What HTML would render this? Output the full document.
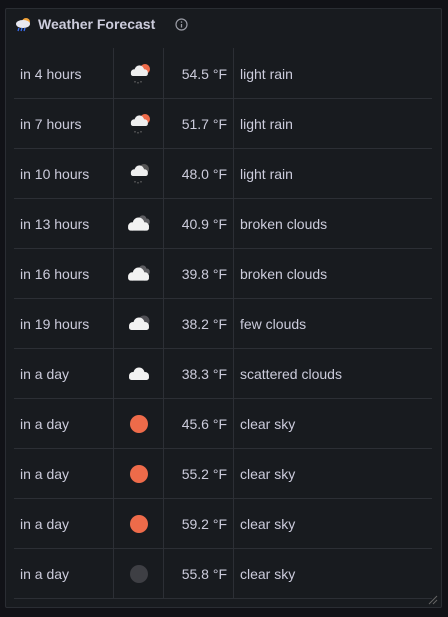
<!DOCTYPE html>
<html><head><style>
body{margin:0;background:#111217;width:448px;height:617px;overflow:hidden;font-family:"Liberation Sans",sans-serif;}
.p{position:absolute;left:5px;top:8px;width:435px;height:598px;background:#181b1f;border:1px solid #2a2d33;border-radius:2px;}
.t{position:absolute;left:38px;top:16px;color:#ccccdc;font-size:14px;font-weight:bold;}
.row{position:absolute;left:14px;width:418px;height:50px;border-bottom:1px solid #2c2f35;color:#ccccdc;font-size:14px;}
.row div{position:absolute;top:1px;height:50px;line-height:50px;}
.c1{left:6px}
.c3{left:150px;width:63px;text-align:right}
.c4{left:226px}
.v{position:absolute;top:48px;width:1px;height:550px;background:#2c2f35;}
.row div.ic{left:112px;top:13px;height:26px;line-height:0}
.ic svg{display:block}
</style></head><body>
<div class="p"></div>
<svg style="position:absolute;left:15px;top:16px" width="17" height="16" viewBox="0 0 17 16"><circle cx="11" cy="6" r="4" fill="#f2a33a"/><ellipse cx="8" cy="8" rx="7" ry="4" fill="#e8e8f0"/><path d="M4 12l-1 3M7 12l-1 3M10 12l-1 3" stroke="#3a6df0" stroke-width="1.3"/></svg>
<div class="t">Weather Forecast</div>
<svg style="position:absolute;left:175px;top:18px" width="13" height="13" viewBox="0 0 13 13"><circle cx="6.5" cy="6.5" r="5.5" fill="none" stroke="#9a9ca5" stroke-width="1.2"/><path d="M6.5 6v3.5" stroke="#9a9ca5" stroke-width="1.3"/><circle cx="6.5" cy="4" r=".8" fill="#9a9ca5"/></svg>
<div class="v" style="left:113px"></div><div class="v" style="left:163px"></div><div class="v" style="left:233px"></div>
<div id="rows"></div>
<svg style="position:absolute;left:428px;top:595px" width="10" height="10"><path d="M1 9L9 1M5 9L9 5" stroke="#666" stroke-width="1"/></svg>
<script>
function cloud(x,y,s,c){return '<g transform="translate('+x+','+y+') scale('+s+')" fill="'+c+'"><circle cx="5" cy="9" r="4"/><circle cx="11" cy="6" r="5.5"/><circle cx="17" cy="9" r="4"/><rect x="1" y="8" width="20" height="5" rx="2.5"/></g>';}
var rainS='<circle cx="19" cy="8" r="5" fill="#ee6b4a"/>'+cloud(4,4,0.85,"#eee")+'<path d="M9 20v1.5M12 21v1.5M15 20v1.5" stroke="#777"/>';
var rainN='<circle cx="18" cy="8" r="5" fill="#555"/>'+cloud(4,4,0.85,"#eee")+'<path d="M9 20v1.5M12 21v1.5M15 20v1.5" stroke="#777"/>';
var d=[["in 4 hours","rs","54.5","light rain"],["in 7 hours","rs","51.7","light rain"],["in 10 hours","rn","48.0","light rain"],["in 13 hours","bc","40.9","broken clouds"],["in 16 hours","bc","39.8","broken clouds"],["in 19 hours","fc","38.2","few clouds"],["in a day","c","38.3","scattered clouds"],["in a day","s","45.6","clear sky"],["in a day","s","55.2","clear sky"],["in a day","s","59.2","clear sky"],["in a day","n","55.8","clear sky"]];
var ic={rs:rainS,rn:rainN,
bc:cloud(9,4,0.7,"#5e5e62")+cloud(1,6,1.05,"#f2f2f2"),
fc:'<circle cx="18" cy="10" r="5.5" fill="#505055"/>'+cloud(2,6,1,"#f2f2f2"),
c:cloud(2,6,1,"#f2f2f2"),
s:'<circle cx="13" cy="13" r="9" fill="#ee6b4a"/>',
n:'<circle cx="13" cy="13" r="9" fill="#3e3f44"/>'};
var h='';d.forEach(function(r,i){h+='<div class="row" style="top:'+(48+i*50)+'px"><div class="c1">'+r[0]+'</div><div class="ic"><svg width="26" height="26">'+ic[r[1]]+'</svg></div><div class="c3">'+r[2]+' °F</div><div class="c4">'+r[3]+'</div></div>';});
document.getElementById('rows').innerHTML=h;
</script>
</body></html>
